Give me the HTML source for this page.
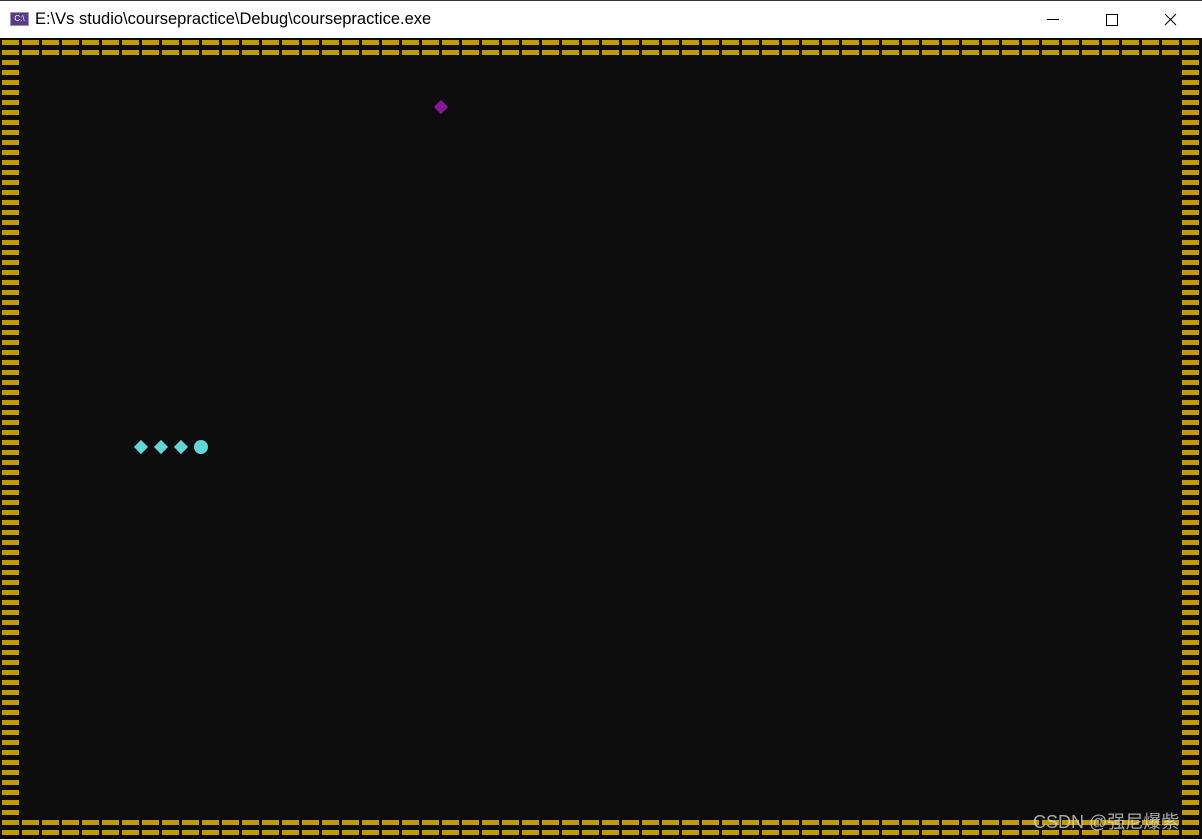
<!DOCTYPE html>
<html><head><style>
html,body{margin:0;padding:0;width:1202px;height:839px;overflow:hidden;background:#0c0c0c;position:relative;font-family:"Liberation Sans","Noto Sans CJK SC",sans-serif}
.title{position:absolute;left:0;top:0;width:1202px;height:38px;background:#fff;border-top:1px solid #333;box-sizing:border-box}
.title .t{position:absolute;left:35px;top:9px;font-size:16.5px;color:#000}
.icon{position:absolute;left:10px;top:11px;width:19px;height:14px;background:#5a3b8c;border:1px solid #999;box-sizing:border-box;color:#fff;font-size:8px;line-height:12px;text-align:center}
.hrow{position:absolute;left:2px;width:1200px;height:5px;background:repeating-linear-gradient(90deg,#c19c00 0 17px,#0c0c0c 17px 20px)}
.vcol{position:absolute;top:60px;width:17px;height:755px;background:repeating-linear-gradient(180deg,#c19c00 0 5px,#0c0c0c 5px 10px)}
.d{position:absolute;width:10px;height:10px;transform:rotate(45deg)}
</style></head><body>
<div class="title"><div class="icon">C:\</div><div class="t">E:\Vs studio\coursepractice\Debug\coursepractice.exe</div>
<svg style="position:absolute;left:1040px;top:8px" width="150" height="22">
<line x1="7" y1="10.5" x2="19" y2="10.5" stroke="#000" stroke-width="1"/>
<rect x="66.5" y="5.5" width="11" height="11" fill="none" stroke="#000"/>
<line x1="125" y1="5" x2="136" y2="16" stroke="#000"/><line x1="136" y1="5" x2="125" y2="16" stroke="#000"/>
</svg></div>
<div class="hrow" style="top:40px"></div>
<div class="hrow" style="top:50px"></div>
<div class="hrow" style="top:820px"></div>
<div class="hrow" style="top:830px"></div>
<div class="vcol" style="left:2px"></div>
<div class="vcol" style="left:1182px"></div>
<div class="d" style="left:436px;top:102px;background:#881798"></div>
<div class="d" style="left:136px;top:442px;background:#61d6d6"></div>
<div class="d" style="left:156px;top:442px;background:#61d6d6"></div>
<div class="d" style="left:176px;top:442px;background:#61d6d6"></div>
<div style="position:absolute;left:194px;top:440px;width:14px;height:14px;border-radius:50%;background:#61d6d6"></div>
<div style="position:absolute;left:1033px;top:808px;font-size:18px;color:rgba(220,220,220,0.75)">CSDN @强尼爆紫</div>
</body></html>
